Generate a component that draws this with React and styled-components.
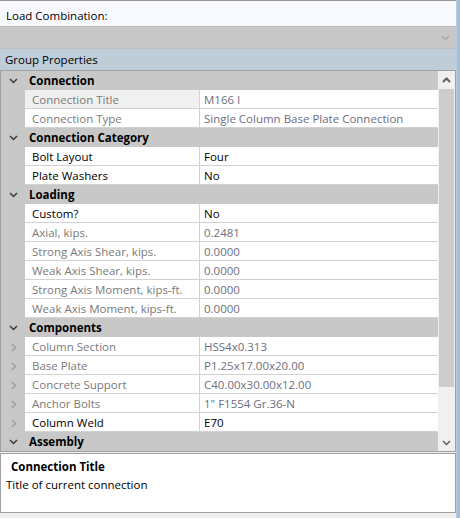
import React from "react";
import styled, { createGlobalStyle } from "styled-components";

const Global = createGlobalStyle`
  html, body { margin: 0; padding: 0; background: #f0f0f0; }
  body { font-family: "Segoe UI", "Open Sans", "Noto Sans", sans-serif; font-size: 11.5px; color: #000; }
  * { box-sizing: border-box; }
`;

const Window = styled.div`
  width: 460px;
  height: 518px;
  display: flex;
  background: #f0f0f0;
  overflow: hidden;
`;

const Main = styled.div`
  width: 456px;
  display: flex;
  flex-direction: column;
`;

const Edge = styled.div`
  width: 4px;
  background: #a7c0d9;
  border-left: 1px solid #b9c9d8;
`;

const LoadLabel = styled.div`
  height: 26px;
  border-top: 1px solid #9a9a9a;
  background: #f8f9fe;
  padding: 7px 0 0 6px;
  line-height: 16px;
`;

const Combo = styled.div`
  height: 23px;
  background: #c8c8c8;
  border-top: 1px solid #bdbdbd;
  border-bottom: 1px solid #bdbdbd;
  display: flex;
  align-items: center;
  justify-content: flex-end;
  padding-right: 6px;
`;

const GroupBar = styled.div`
  height: 21px;
  background: #bfcdd9;
  padding: 3px 0 0 5px;
  line-height: 16px;
`;

const Grid = styled.div`
  height: 382px;
  border: 1px solid #a0a0a0;
  display: flex;
  background: #c8c8c8;
`;

const Rows = styled.div`
  flex: 1;
  display: flex;
  flex-direction: column;
`;

const Row = styled.div`
  height: 19px;
  display: flex;
  background: ${(p) => (p.$category ? "#c8c8c8" : "#ffffff")};
`;

const Gutter = styled.div`
  width: 24px;
  height: 19px;
  background: #c8c8c8;
  display: flex;
  align-items: center;
  padding-top: 1px;
  padding-left: ${(p) => (p.$category ? "8px" : "10px")};
`;

const CategoryText = styled.div`
  font-weight: 700;
  line-height: 18px;
  padding-top: 1px;
  padding-left: 4px;
`;

const NameCell = styled.div`
  width: 175px;
  height: 19px;
  padding: 1px 0 0 7px;
  line-height: 17px;
  border-bottom: 1px solid #d2d2d2;
  border-right: 1px solid #d2d2d2;
  background: ${(p) => (p.$selected ? "#f0f0f0" : "#ffffff")};
  color: ${(p) => (p.$readonly ? "#7a7a7a" : "#000")};
  white-space: nowrap;
`;

const ValueCell = styled.div`
  flex: 1;
  height: 19px;
  padding: 1px 0 0 4px;
  line-height: 17px;
  border-bottom: 1px solid #d2d2d2;
  color: ${(p) => (p.$readonly ? "#6e6e7e" : "#000")};
  white-space: nowrap;
`;

const Scrollbar = styled.div`
  width: 17px;
  background: #f0f0f0;
  display: flex;
  flex-direction: column;
`;

const ScrollArrow = styled.div`
  height: 17px;
  display: flex;
  align-items: center;
  justify-content: center;
`;

const Track = styled.div`
  flex: 1;
  display: flex;
  flex-direction: column;
`;

const Thumb = styled.div`
  margin: 1px 1px 0 1px;
  height: 298px;
  background: #cdcdcd;
`;

const Desc = styled.div`
  margin-top: 1px;
  height: 60px;
  border: 1px solid #a0a0a0;
  background: #fff;
  padding: 4px 0 0 5px;
`;

const DescTitle = styled.div`
  font-weight: 700;
  line-height: 17px;
  padding-left: 5px;
`;

const DescText = styled.div`
  line-height: 17px;
  margin-top: 1px;
`;

const Down = ({ color = "#3c3c3c" }) => (
  <svg width="9" height="6" viewBox="0 0 9 6">
    <polyline points="1,1 4.5,4.5 8,1" fill="none" stroke={color} strokeWidth="1.5" />
  </svg>
);

const Right = () => (
  <svg width="6" height="9" viewBox="0 0 6 9">
    <polyline points="1,1 4.5,4.5 1,8" fill="none" stroke="#a0a0a0" strokeWidth="1.6" />
  </svg>
);

const Up = () => (
  <svg width="9" height="6" viewBox="0 0 9 6">
    <polyline points="1,5 4.5,1.5 8,5" fill="none" stroke="#606060" strokeWidth="2" />
  </svg>
);

const data = [
  { cat: "Connection" },
  { name: "Connection Title", value: "M166 I", ro: true, selected: true },
  { name: "Connection Type", value: "Single Column Base Plate Connection", ro: true },
  { cat: "Connection Category" },
  { name: "Bolt Layout", value: "Four" },
  { name: "Plate Washers", value: "No" },
  { cat: "Loading" },
  { name: "Custom?", value: "No" },
  { name: "Axial, kips.", value: "0.2481", ro: true },
  { name: "Strong Axis Shear, kips.", value: "0.0000", ro: true },
  { name: "Weak Axis Shear, kips.", value: "0.0000", ro: true },
  { name: "Strong Axis Moment, kips-ft.", value: "0.0000", ro: true },
  { name: "Weak Axis Moment, kips-ft.", value: "0.0000", ro: true },
  { cat: "Components" },
  { name: "Column Section", value: "HSS4x0.313", ro: true, exp: true },
  { name: "Base Plate", value: "P1.25x17.00x20.00", ro: true, exp: true },
  { name: "Concrete Support", value: "C40.00x30.00x12.00", ro: true, exp: true },
  { name: "Anchor Bolts", value: "1\" F1554 Gr.36-N", ro: true, exp: true },
  { name: "Column Weld", value: "E70", exp: true },
  { cat: "Assembly" },
];

export default function App() {
  return (
    <Window>
      <Global />
      <Main>
        <LoadLabel>Load Combination:</LoadLabel>
        <Combo>
          <Down color="#a9a9a9" />
        </Combo>
        <GroupBar>Group Properties</GroupBar>
        <Grid>
          <Rows>
            {data.map((r, i) =>
              r.cat ? (
                <Row key={i} $category>
                  <Gutter $category>
                    <Down />
                  </Gutter>
                  <CategoryText>{r.cat}</CategoryText>
                </Row>
              ) : (
                <Row key={i}>
                  <Gutter>{r.exp && <Right />}</Gutter>
                  <NameCell $readonly={r.ro} $selected={r.selected}>
                    {r.name}
                  </NameCell>
                  <ValueCell $readonly={r.ro}>{r.value}</ValueCell>
                </Row>
              )
            )}
          </Rows>
          <Scrollbar>
            <ScrollArrow>
              <Up />
            </ScrollArrow>
            <Track>
              <Thumb />
            </Track>
            <ScrollArrow>
              <Down color="#606060" />
            </ScrollArrow>
          </Scrollbar>
        </Grid>
        <Desc>
          <DescTitle>Connection Title</DescTitle>
          <DescText>Title of current connection</DescText>
        </Desc>
      </Main>
      <Edge />
    </Window>
  );
}
